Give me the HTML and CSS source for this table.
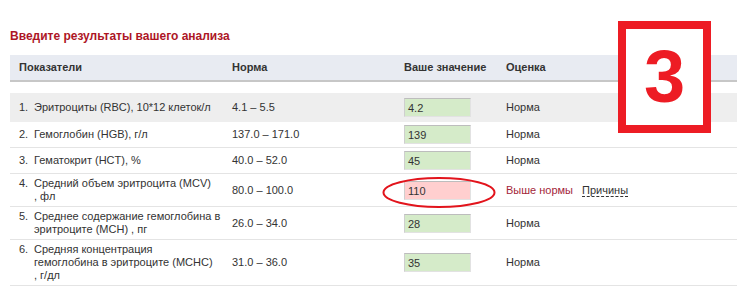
FILE: index.html
```html
<!DOCTYPE html>
<html lang="ru">
<head>
<meta charset="utf-8">
<link rel="stylesheet" href="styles.css">
</head>
<body>
<div class="page">
  <h1 class="title">Введите результаты вашего анализа</h1>
  <div class="grid">
    <div class="row head">
      <div class="cell c1">Показатели</div>
      <div class="cell c2">Норма</div>
      <div class="cell c3">Ваше значение</div>
      <div class="cell c4">Оценка</div>
    </div>
    <div class="row first">
      <div class="cell c1"><span class="num">1.</span><span class="name">Эритроциты (RBC), 10*12 клеток/л</span></div>
      <div class="cell c2">4.1 – 5.5</div>
      <div class="cell c3"><div class="val ok">4.2</div></div>
      <div class="cell c4">Норма</div>
    </div>
    <div class="row">
      <div class="cell c1"><span class="num">2.</span><span class="name">Гемоглобин (HGB), г/л</span></div>
      <div class="cell c2">137.0 – 171.0</div>
      <div class="cell c3"><div class="val ok">139</div></div>
      <div class="cell c4">Норма</div>
    </div>
    <div class="row">
      <div class="cell c1"><span class="num">3.</span><span class="name">Гематокрит (HCT), %</span></div>
      <div class="cell c2">40.0 – 52.0</div>
      <div class="cell c3"><div class="val ok">45</div></div>
      <div class="cell c4">Норма</div>
    </div>
    <div class="row">
      <div class="cell c1"><span class="num">4.</span><span class="name">Средний объем эритроцита (MCV)<br>, фл</span></div>
      <div class="cell c2">80.0 – 100.0</div>
      <div class="cell c3"><div class="val bad">110</div></div>
      <div class="cell c4"><span class="high">Выше нормы</span><span class="why">Причины</span></div>
    </div>
    <div class="row">
      <div class="cell c1"><span class="num">5.</span><span class="name">Среднее содержание гемоглобина в<br>эритроците (MCH) , пг</span></div>
      <div class="cell c2">26.0 – 34.0</div>
      <div class="cell c3"><div class="val ok">28</div></div>
      <div class="cell c4">Норма</div>
    </div>
    <div class="row">
      <div class="cell c1"><span class="num">6.</span><span class="name">Средняя концентрация<br>гемоглобина в эритроците (MCHC)<br>, г/дл</span></div>
      <div class="cell c2">31.0 – 36.0</div>
      <div class="cell c3"><div class="val ok">35</div></div>
      <div class="cell c4">Норма</div>
    </div>
  </div>
  <svg class="ring" width="116" height="33" viewBox="0 0 116 33"><ellipse cx="58" cy="16.5" rx="55.5" ry="14.5" fill="none" stroke="#e2141c" stroke-width="2"/></svg>
  <div class="stamp">3</div>
</div>
</body>
</html>
```
FILE: styles.css
```css
html, body {
  margin: 0;
  padding: 0;
  background: #ffffff;
}
.page {
  position: relative;
  width: 749px;
  height: 301px;
  overflow: hidden;
  font-family: "Liberation Sans", Arial, sans-serif;
  font-size: 11px;
  line-height: 13px;
  color: #333333;
}
.title {
  margin: 0;
  padding: 29px 0 0 10px;
  font-size: 12px;
  line-height: 14px;
  font-weight: bold;
  color: #ad1626;
}
.grid {
  margin: 12px 0 0 10px;
  width: 727px;
}
.row {
  display: grid;
  grid-template-columns: 213px 172px 102px 240px;
  align-items: center;
  padding: 3px 0;
  border-bottom: 1px solid #e4e4e4;
}
.row.head {
  height: 25px;
  padding: 0;
  background: #e8ebf2;
  border-bottom: 2px solid #c7c7c7;
  font-weight: bold;
  margin-bottom: 11px;
}
.row.first {
  background: #eeeeee;
  padding: 5px 0;
  border-bottom: none;
}
.cell {
  padding-left: 9px;
}
.c1 {
  display: flex;
  align-items: flex-start;
}
.head .c1 {
  display: block;
}
.num {
  flex: 0 0 15px;
}
.name {
  width: 190px;
}
.val {
  box-sizing: border-box;
  width: 67px;
  height: 19px;
  padding: 3px 0 0 3px;
  line-height: 13px;
  border: 1px solid #e2e2e2;
  border-top-color: #bdbdbd;
  border-left-color: #cfcfcf;
  color: #333333;
}
.val.ok {
  background: #d5ebc9;
}
.val.bad {
  background: #ffcfcf;
}
.high {
  color: #a3263a;
  margin-right: 9px;
}
.why {
  border-bottom: 1px dashed #333333;
  line-height: 12px;
}
.ring {
  position: absolute;
  left: 381px;
  top: 176px;
}
.stamp {
  position: absolute;
  left: 618px;
  top: 21px;
  box-sizing: border-box;
  width: 93px;
  height: 112px;
  border: 8px solid #ed1c24;
  background: #ffffff;
  color: #ed1c24;
  font-family: "Liberation Sans", Arial, sans-serif;
  font-weight: bold;
  font-size: 74px;
  line-height: 96px;
  text-align: center;
}
```
